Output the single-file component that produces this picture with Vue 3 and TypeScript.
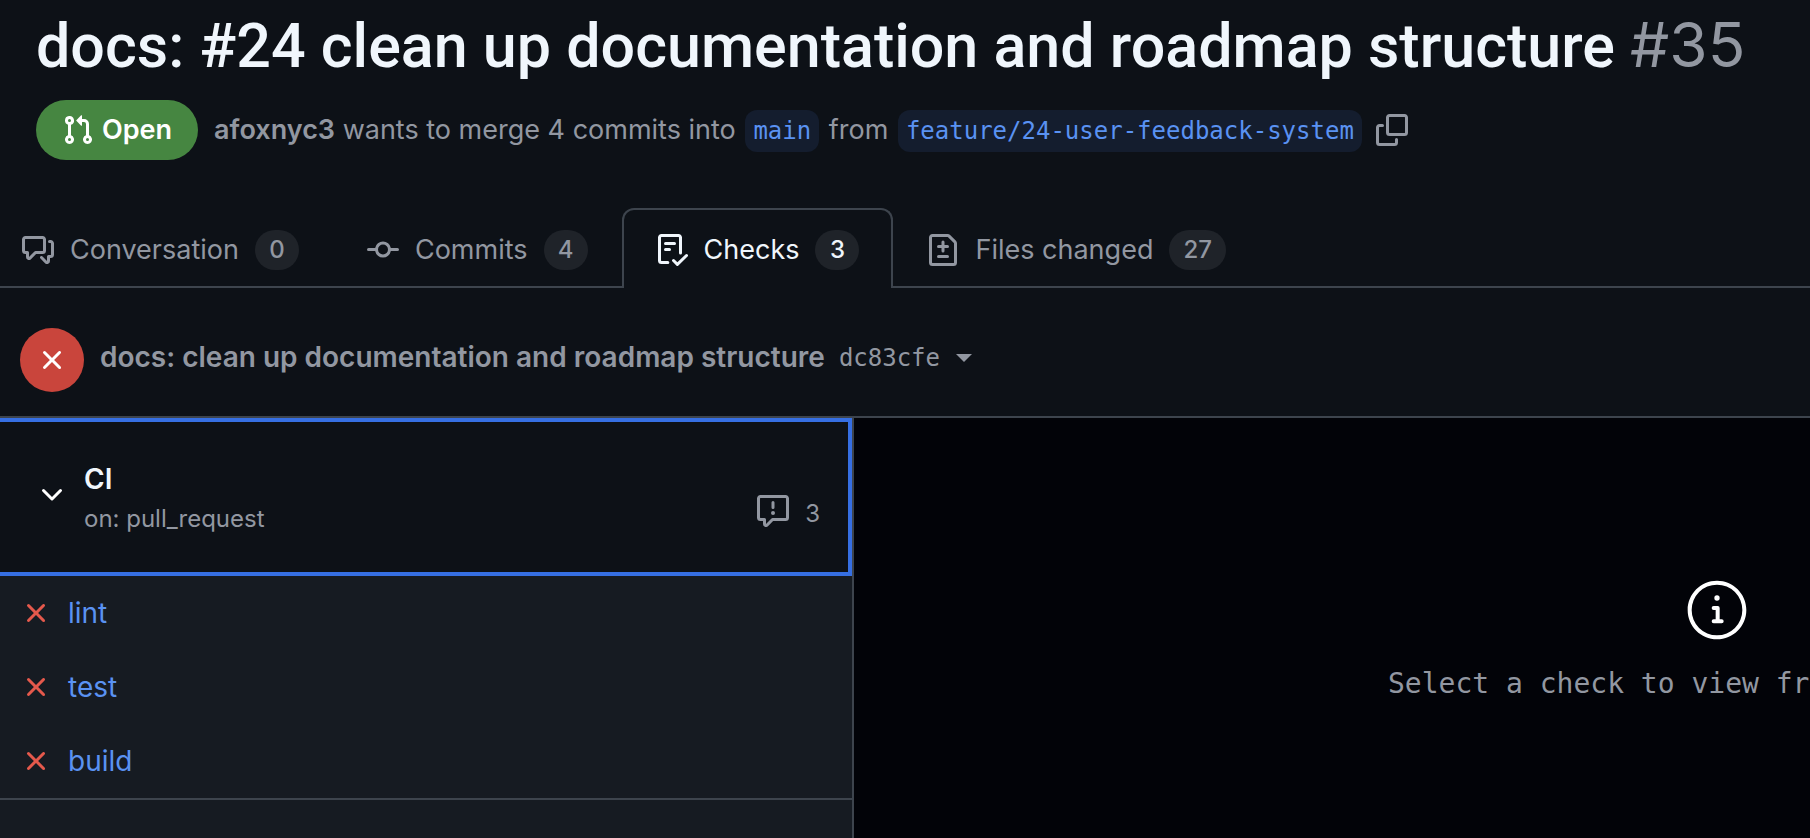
<script setup lang="ts">
import { ref } from 'vue'

interface Tab {
  id: string
  label: string
  count: number
  icon: string
}

const icons = {
  pullRequest:
    'M1.5 3.25a2.25 2.25 0 1 1 3 2.122v5.256a2.251 2.251 0 1 1-1.5 0V5.372A2.25 2.25 0 0 1 1.5 3.25Zm5.677-.177L9.573.677A.25.25 0 0 1 10 .854V2.5h1A2.5 2.5 0 0 1 13.5 5v5.628a2.251 2.251 0 1 1-1.5 0V5a1 1 0 0 0-1-1h-1v1.646a.25.25 0 0 1-.427.177L7.177 3.427a.25.25 0 0 1 0-.354ZM3.75 2.5a.75.75 0 1 0 0 1.5.75.75 0 0 0 0-1.5Zm0 9.5a.75.75 0 1 0 0 1.5.75.75 0 0 0 0-1.5Zm8.25.75a.75.75 0 1 0 1.5 0 .75.75 0 0 0-1.5 0Z',
  copy: 'M0 6.75C0 5.784.784 5 1.75 5h1.5a.75.75 0 0 1 0 1.5h-1.5a.25.25 0 0 0-.25.25v7.5c0 .138.112.25.25.25h7.5a.25.25 0 0 0 .25-.25v-1.5a.75.75 0 0 1 1.5 0v1.5A1.75 1.75 0 0 1 9.25 16h-7.5A1.75 1.75 0 0 1 0 14.25ZM5 1.75C5 .784 5.784 0 6.75 0h7.5C15.216 0 16 .784 16 1.75v7.5A1.75 1.75 0 0 1 14.25 11h-7.5A1.75 1.75 0 0 1 5 9.25Zm1.75-.25a.25.25 0 0 0-.25.25v7.5c0 .138.112.25.25.25h7.5a.25.25 0 0 0 .25-.25v-7.5a.25.25 0 0 0-.25-.25Z',
  discussion:
    'M1.75 1h8.5c.966 0 1.75.784 1.75 1.75v5.5A1.75 1.75 0 0 1 10.25 10H7.061l-2.574 2.573A1.458 1.458 0 0 1 2 11.543V10h-.25A1.75 1.75 0 0 1 0 8.25v-5.5C0 1.784.784 1 1.75 1ZM1.5 2.75v5.5c0 .138.112.25.25.25h1a.75.75 0 0 1 .75.75v2.19l2.72-2.72a.749.749 0 0 1 .53-.22h3.5a.25.25 0 0 0 .25-.25v-5.5a.25.25 0 0 0-.25-.25h-8.5a.25.25 0 0 0-.25.25Zm13 2a.25.25 0 0 0-.25-.25h-.5a.75.75 0 0 1 0-1.5h.5c.966 0 1.75.784 1.75 1.75v5.5A1.75 1.75 0 0 1 14.25 12H14v1.543a1.458 1.458 0 0 1-2.487 1.03L9.22 12.28a.749.749 0 0 1 .326-1.275.749.749 0 0 1 .734.215l2.22 2.22v-2.19a.75.75 0 0 1 .75-.75h1a.25.25 0 0 0 .25-.25Z',
  commit:
    'M11.93 8.5a4.002 4.002 0 0 1-7.86 0H.75a.75.75 0 0 1 0-1.5h3.32a4.002 4.002 0 0 1 7.86 0h3.32a.75.75 0 0 1 0 1.5Zm-1.43-.75a2.5 2.5 0 1 0-5 0 2.5 2.5 0 0 0 5 0Z',
  checklist:
    'M2.5 1.75v11.5c0 .138.112.25.25.25h3.17a.75.75 0 0 1 0 1.5H2.75A1.75 1.75 0 0 1 1 13.25V1.75C1 .784 1.784 0 2.75 0h8.5C12.216 0 13 .784 13 1.75v7.736a.75.75 0 0 1-1.5 0V1.75a.25.25 0 0 0-.25-.25h-8.5a.25.25 0 0 0-.25.25Zm13.274 9.537v-.001l-4.557 4.45a.75.75 0 0 1-1.055-.008l-1.943-1.95a.75.75 0 0 1 1.062-1.058l1.419 1.425 4.026-3.932a.75.75 0 1 1 1.048 1.074ZM4.75 4h4.5a.75.75 0 0 1 0 1.5h-4.5a.75.75 0 0 1 0-1.5ZM4 7.75A.75.75 0 0 1 4.75 7h2a.75.75 0 0 1 0 1.5h-2A.75.75 0 0 1 4 7.75Z',
  fileDiff:
    'M1 1.75C1 .784 1.784 0 2.75 0h7.586c.464 0 .909.184 1.237.513l2.914 2.914c.329.328.513.773.513 1.237v9.586A1.75 1.75 0 0 1 13.25 16H2.75A1.75 1.75 0 0 1 1 14.25Zm1.75-.25a.25.25 0 0 0-.25.25v12.5c0 .138.112.25.25.25h10.5a.25.25 0 0 0 .25-.25V4.664a.25.25 0 0 0-.073-.177l-2.914-2.914a.25.25 0 0 0-.177-.073ZM8 3.25a.75.75 0 0 1 .75.75v1.5h1.5a.75.75 0 0 1 0 1.5h-1.5v1.5a.75.75 0 0 1-1.5 0V7h-1.5a.75.75 0 0 1 0-1.5h1.5V4A.75.75 0 0 1 8 3.25Zm-3 8a.75.75 0 0 1 .75-.75h4.5a.75.75 0 0 1 0 1.5h-4.5a.75.75 0 0 1-.75-.75Z',
  x: 'M3.72 3.72a.75.75 0 0 1 1.06 0L8 6.94l3.22-3.22a.749.749 0 0 1 1.275.326.749.749 0 0 1-.215.734L9.06 8l3.22 3.22a.749.749 0 0 1-.326 1.275.749.749 0 0 1-.734-.215L8 9.06l-3.22 3.22a.751.751 0 0 1-1.042-.018.751.751 0 0 1-.018-1.042L6.94 8 3.72 4.78a.75.75 0 0 1 0-1.06Z',
  chevron:
    'M12.78 5.22a.749.749 0 0 1 0 1.06l-4.25 4.25a.749.749 0 0 1-1.06 0L3.22 6.28a.749.749 0 1 1 1.06-1.06L8 8.939l3.72-3.719a.749.749 0 0 1 1.06 0Z',
  report:
    'M0 1.75C0 .784.784 0 1.75 0h12.5C15.216 0 16 .784 16 1.75v9.5A1.75 1.75 0 0 1 14.25 13H8.06l-2.573 2.573A1.458 1.458 0 0 1 3 14.543V13H1.75A1.75 1.75 0 0 1 0 11.25Zm1.75-.25a.25.25 0 0 0-.25.25v9.5c0 .138.112.25.25.25h2a.75.75 0 0 1 .75.75v2.19l2.72-2.72a.749.749 0 0 1 .53-.22h6.5a.25.25 0 0 0 .25-.25v-9.5a.25.25 0 0 0-.25-.25Zm7 2.25v2.5a.75.75 0 0 1-1.5 0v-2.5a.75.75 0 0 1 1.5 0ZM9 9a1 1 0 1 1-2 0 1 1 0 0 1 2 0Z',
  info: 'M13 7.5a1 1 0 1 1-2 0 1 1 0 0 1 2 0Zm-3 3.75a.75.75 0 0 1 .75-.75h1.5a.75.75 0 0 1 .75.75v4.25h.75a.75.75 0 0 1 0 1.5h-3a.75.75 0 0 1 0-1.5h.75V12h-.75a.75.75 0 0 1-.75-.75ZM12 1c6.075 0 11 4.925 11 11s-4.925 11-11 11S1 18.075 1 12 5.925 1 12 1ZM2.5 12a9.5 9.5 0 0 0 9.5 9.5 9.5 9.5 0 0 0 9.5-9.5A9.5 9.5 0 0 0 12 2.5 9.5 9.5 0 0 0 2.5 12Z',
}

const tabs: Tab[] = [
  { id: 'conversation', label: 'Conversation', count: 0, icon: icons.discussion },
  { id: 'commits', label: 'Commits', count: 4, icon: icons.commit },
  { id: 'checks', label: 'Checks', count: 3, icon: icons.checklist },
  { id: 'files', label: 'Files changed', count: 27, icon: icons.fileDiff },
]
const activeTab = ref('checks')

const jobs = ['lint', 'test', 'build']
const expanded = ref(true)
</script>

<template>
  <div class="page">
    <header class="head">
      <h1 class="title">
        docs: #24 clean up documentation and roadmap structure
        <span class="number">#35</span>
      </h1>
      <div class="meta">
        <span class="state">
          <svg class="icon" viewBox="0 0 16 16" aria-hidden="true"><path :d="icons.pullRequest" /></svg>
          Open
        </span>
        <p class="summary">
          <a class="author" href="#author">afoxnyc3</a> wants to merge 4 commits into
          <a class="branch" href="#main">main</a> from
          <a class="branch" href="#feature">feature/24-user-feedback-system</a>
        </p>
        <button class="plain" type="button" aria-label="Copy branch name">
          <svg class="icon" viewBox="0 0 16 16" aria-hidden="true"><path :d="icons.copy" /></svg>
        </button>
      </div>
    </header>

    <nav class="tabs" aria-label="Pull request">
      <a
        v-for="tab in tabs"
        :key="tab.id"
        class="tab"
        :class="{ active: tab.id === activeTab }"
        :href="'#' + tab.id"
        :aria-current="tab.id === activeTab ? 'page' : undefined"
        @click="activeTab = tab.id"
      >
        <svg class="icon" viewBox="0 0 16 16" aria-hidden="true"><path :d="tab.icon" /></svg>
        <span>{{ tab.label }}</span>
        <span class="count">{{ tab.count }}</span>
      </a>
    </nav>

    <section class="commit">
      <span class="failed">
        <svg class="icon" viewBox="0 0 16 16" aria-hidden="true"><path :d="icons.x" /></svg>
      </span>
      <h2 class="commit-title">docs: clean up documentation and roadmap structure</h2>
      <button class="plain sha" type="button">dc83cfe<span class="caret"></span></button>
    </section>

    <div class="body">
      <aside class="sidebar">
        <button class="suite" type="button" :aria-expanded="expanded" @click="expanded = !expanded">
          <svg class="icon" viewBox="0 0 16 16" aria-hidden="true"><path :d="icons.chevron" /></svg>
          <span class="suite-text">
            <span class="suite-name">CI</span>
            <span class="suite-event">on: pull_request</span>
          </span>
          <span class="notes">
            <svg class="icon" viewBox="0 0 16 16" aria-hidden="true"><path :d="icons.report" /></svg>
            <span>3</span>
          </span>
        </button>
        <ul v-if="expanded" class="jobs">
          <li v-for="job in jobs" :key="job" class="job">
            <svg class="icon job-icon" viewBox="0 0 16 16" aria-hidden="true"><path :d="icons.x" /></svg>
            <a class="job-link" :href="'#' + job">{{ job }}</a>
          </li>
        </ul>
      </aside>
      <main class="detail">
        <div class="blank">
          <svg class="blank-icon" viewBox="0 0 24 24" aria-hidden="true"><path :d="icons.info" /></svg>
          <p class="blank-text">Select a check to view from the sidebar</p>
        </div>
      </main>
    </div>
  </div>
</template>

<style>
html,
body {
  margin: 0;
  background: #0d1117;
}
</style>

<style scoped>
.page {
  display: flex;
  flex-direction: column;
  min-height: 100vh;
  overflow: hidden;
  box-sizing: border-box;
  background: #0d1117;
  color: #9297a1;
  font-family: Inter, 'Liberation Sans', sans-serif;
  font-size: 28px;
  line-height: 40px;
}

a {
  color: inherit;
  text-decoration: none;
}

button {
  font: inherit;
  color: inherit;
  cursor: pointer;
}

.icon {
  display: block;
  flex: none;
  width: 32px;
  height: 32px;
  fill: currentColor;
}

.plain {
  display: flex;
  align-items: center;
  padding: 0;
  border: 0;
  background: none;
}

.head {
  padding: 6px 36px 0;
}

.title {
  margin: 0;
  color: #f0f6fc;
  font-family: Roboto, Inter, sans-serif;
  font-size: 61px;
  font-weight: 500;
  line-height: 80px;
  white-space: nowrap;
}

.number {
  color: #9297a1;
  font-family: Inter, 'Liberation Sans', sans-serif;
  font-size: 62px;
  font-weight: 400;
  line-height: 1;
}

.meta {
  display: flex;
  align-items: center;
  margin-top: 14px;
  font-size: 27px;
  white-space: nowrap;
}

.state {
  display: flex;
  align-items: center;
  gap: 8px;
  margin-right: 16px;
  padding: 10px 26px;
  border-radius: 30px;
  background: #468641;
  color: #fff;
  font-weight: 600;
}

.summary {
  margin: 2px 12px 0 0;
}

.author {
  font-weight: 600;
}

.branch {
  display: inline-block;
  margin: 0 2px;
  padding: 0 8px;
  border-radius: 12px;
  background: #141d2e;
  color: #5a92f2;
  font-family: 'DejaVu Sans Mono', monospace;
  font-size: 24px;
  line-height: 42px;
}

.tabs {
  display: flex;
  height: 80px;
  margin-top: 48px;
  margin-left: -12px;
  box-shadow: inset 0 -2px #3d444d;
  font-size: 27px;
  white-space: nowrap;
}

.tab {
  display: flex;
  align-items: center;
  gap: 16px;
  box-sizing: border-box;
  padding: 2px 32px 0;
  border: 2px solid transparent;
  border-bottom: 0;
  border-radius: 12px 12px 0 0;
}

.tab.active {
  border-color: #3d444d;
  background: #0d1117;
  color: #f0f6fc;
}

.count {
  min-width: 16px;
  padding: 0 14px;
  border-radius: 20px;
  background: #1f2329;
  font-size: 24px;
  font-weight: 500;
  text-align: center;
}

.commit {
  display: flex;
  align-items: center;
  padding: 40px 20px 24px;
  border-bottom: 2px solid #3d444d;
  white-space: nowrap;
}

.failed {
  display: grid;
  place-items: center;
  width: 64px;
  height: 64px;
  margin-right: 16px;
  border-radius: 50%;
  background: #c9453c;
  color: #fff;
}

.commit-title {
  margin: 0 14px 6px 0;
  font-size: 28px;
  font-weight: 600;
}

.sha {
  gap: 16px;
  margin-bottom: 4px;
  font-family: 'DejaVu Sans Mono', monospace;
  font-size: 24px;
}

.caret {
  border: 8px solid transparent;
  border-top-color: currentColor;
  border-bottom: 0;
}

.body {
  display: grid;
  flex: 1;
  grid-template-columns: minmax(320px, 854px) minmax(0, 1fr);
}

.sidebar {
  border-right: 2px solid #3d444d;
  background: #161b22;
}

.suite {
  display: flex;
  align-items: center;
  box-sizing: border-box;
  width: 100%;
  padding: 37px 28px 33px 36px;
  border: 4px solid #366fe3;
  border-left: 0;
  background: #0d1117;
  text-align: left;
}

.suite > .icon {
  margin-bottom: 8px;
  color: #fff;
}

.suite-text {
  display: flex;
  flex: 1;
  flex-direction: column;
  margin-left: 16px;
}

.suite-name {
  color: #f0f6fc;
  font-weight: 600;
}

.suite-event,
.notes {
  font-size: 24px;
}

.notes {
  display: flex;
  align-items: center;
  gap: 16px;
  margin-top: 30px;
}

.notes .icon {
  margin-bottom: 6px;
}

.jobs {
  margin: 0;
  padding: 0;
  border-bottom: 2px solid #3d444d;
  list-style: none;
}

.job {
  display: flex;
  align-items: center;
  gap: 16px;
  padding: 17px 20px;
}

.job-icon {
  color: #e5594c;
}

.job-link {
  color: #5a92f2;
}

.detail {
  padding: 160px 0 0 534px;
  overflow: hidden;
  background: #020308;
}

.blank {
  display: inline-flex;
  flex-direction: column;
  align-items: center;
}

.blank-icon {
  width: 64px;
  height: 64px;
  fill: #fff;
}

.blank-text {
  margin: 22px 0 0;
  font-family: 'DejaVu Sans Mono', monospace;
  white-space: nowrap;
}
</style>
